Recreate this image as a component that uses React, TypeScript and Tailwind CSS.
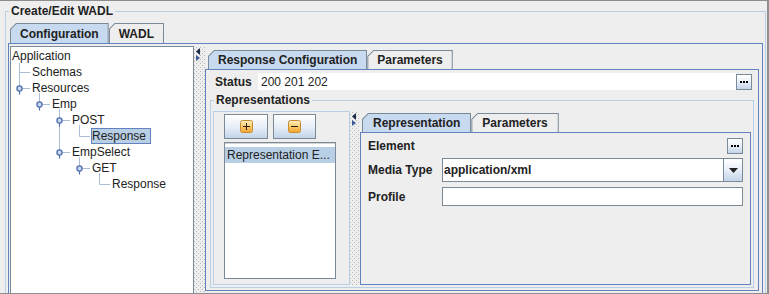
import clsx from "clsx";

type TreeRow = { label: string; pad: string; selected?: boolean };

const TREE: TreeRow[] = [
  { label: "Application", pad: "pl-[1px]" },
  { label: "Schemas", pad: "pl-[21px]" },
  { label: "Resources", pad: "pl-[21px]" },
  { label: "Emp", pad: "pl-[41px]" },
  { label: "POST", pad: "pl-[61px]" },
  { label: "Response", pad: "pl-[80px]", selected: true },
  { label: "EmpSelect", pad: "pl-[61px]" },
  { label: "GET", pad: "pl-[81px]" },
  { label: "Response", pad: "pl-[101px]" },
];

// tree handle centres, relative to the tree's white area
const HANDLES: [number, number][] = [
  [8.5, 41.5],
  [28.5, 57.5],
  [48.5, 73.5],
  [48.5, 105.5],
  [68.5, 121.5],
];

const GRAD_BTN =
  "border border-[#7a8a99] bg-linear-to-b from-white via-[#e8eff8] to-[#c3d4e9]";

const DOTTED =
  "[background-image:conic-gradient(at_1px_1px,transparent_75%,#b9b9b9_0),conic-gradient(at_1px_1px,transparent_75%,#b9b9b9_0)] [background-position:2px_1px,4px_3px] [background-size:4px_4px]";

function Tab({
  label,
  selected,
  size,
  pad,
}: {
  label: string;
  selected?: boolean;
  size: string;
  pad: string;
}) {
  return (
    <div
      className={clsx(
        "bg-[#7a8a99] px-px pt-px [clip-path:polygon(6px_0,100%_0,100%_100%,0_100%,0_6px)]",
        size
      )}
    >
      <div
        className={clsx(
          "flex h-full items-center font-bold [clip-path:polygon(5.4px_0,100%_0,100%_100%,0_100%,0_5.4px)]",
          selected ? "bg-[#c8daf0]" : "bg-[#eeeeee]",
          pad
        )}
      >
        {label}
      </div>
    </div>
  );
}

function Dots() {
  return (
    <svg width="8" height="2" viewBox="0 0 8 2" aria-hidden>
      <rect x="0" y="0" width="2" height="2" fill="#000" />
      <rect x="3" y="0" width="2" height="2" fill="#000" />
      <rect x="6" y="0" width="2" height="2" fill="#000" />
    </svg>
  );
}

function DotsButton() {
  return (
    <div className={clsx("flex h-[16px] w-[16px] shrink-0 items-center justify-center", GRAD_BTN)}>
      <Dots />
    </div>
  );
}

function OrangeIcon({ plus }: { plus?: boolean }) {
  const id = plus ? "og-plus" : "og-minus";
  return (
    <svg width="13" height="13" viewBox="0 0 13 13" aria-hidden>
      <defs>
        <linearGradient id={id} x1="0" y1="0" x2="0" y2="1">
          <stop offset="0" stopColor="#fff1c8" />
          <stop offset="0.5" stopColor="#fccb68" />
          <stop offset="1" stopColor="#f2a232" />
        </linearGradient>
      </defs>
      <rect x="0.5" y="0.5" width="12" height="12" rx="2" fill={`url(#${id})`} stroke="#c98b32" />
      <path d={plus ? "M6.5 3v7M3 6.5h7" : "M3 6.5h7"} stroke="#2b2112" />
    </svg>
  );
}

function SplitArrows() {
  return (
    <svg width="5" height="13" viewBox="0 0 5 13" aria-hidden>
      <path d="M0 3.5L4 0v7z" fill="#1d2b48" />
      <path d="M0 7v6l4-3z" fill="#3c5b96" />
    </svg>
  );
}

function Splitter({ width }: { width: string }) {
  return (
    <div className={clsx("shrink-0 self-stretch pl-[2px] pt-[2px]", width, DOTTED)}>
      <SplitArrows />
    </div>
  );
}

function TreeLines() {
  return (
    <svg
      className="pointer-events-none absolute left-0 top-0"
      width="182"
      height="150"
      viewBox="0 0 182 150"
      fill="none"
      aria-hidden
    >
      <path
        d="M8.5 16V41.5M8.5 25.5H19M8.5 41.5H19M28.5 46V57.5H39M48.5 62V105.5M48.5 73.5H59M48.5 105.5H59M68.5 78V89.5H79M68.5 110V121.5H79M88.5 126V137.5H99"
        stroke="#a9bdd6"
      />
      {HANDLES.map(([x, y]) => (
        <g key={`${x}-${y}`}>
          <path d={`M${x} ${y + 2}v4`} stroke="#4f6fae" strokeWidth="1.2" />
          <circle cx={x} cy={y} r="2.6" fill="#c9d8ee" stroke="#4f6fae" strokeWidth="1.3" />
        </g>
      ))}
    </svg>
  );
}

function Tree() {
  return (
    <div className="relative h-[260px] w-[184px] shrink-0 border border-b-0 border-[#7a8a99] bg-white pt-px">
      <TreeLines />
      {TREE.map((row, i) => (
        <div key={i} className={clsx("relative h-[16px] leading-[16px]", row.pad)}>
          {row.selected ? (
            <span className="inline-block h-[16px] border border-[#6382bf] bg-[#b8cfe5] pr-[4px] leading-[14px]">
              {row.label}
            </span>
          ) : (
            row.label
          )}
        </div>
      ))}
    </div>
  );
}

function RepresentationsList() {
  return (
    <div className="h-[174px] w-[137px] shrink-0 border border-[#b8cfe5] pl-[10px] pt-[2px]">
      <div className="flex gap-[5px]">
        <div className={clsx("flex h-[25px] w-[44px] items-center justify-center", GRAD_BTN)}>
          <OrangeIcon plus />
        </div>
        <div className={clsx("flex h-[25px] w-[43px] items-center justify-center", GRAD_BTN)}>
          <OrangeIcon />
        </div>
      </div>
      <div className="mt-[3px] h-[137px] w-[112px] border border-[#7a8a99] bg-white">
        <div className="h-[4px] border-t border-[#d4d4d4]" />
        <div className="h-[16px] truncate bg-[#b8cfe5] pl-[2px] leading-[16px]">
          Representation E...
        </div>
      </div>
    </div>
  );
}

function RepresentationPanel() {
  return (
    <div className="pt-[2px]">
      <div className="ml-[2px] flex">
        <Tab label="Representation" selected size="h-[19px]" pad="px-[10px]" />
        <Tab label="Parameters" size="h-[19px]" pad="px-[10px]" />
      </div>
      <div className="h-[153px] w-[391px] border border-[#6382bf] px-[7px] pt-[5px]">
        <div className="flex h-[16px] items-center justify-between">
          <span className="font-bold">Element</span>
          <DotsButton />
        </div>
        <div className="mt-[4px] flex h-[24px] items-center">
          <span className="w-[74px] shrink-0 font-bold">Media Type</span>
          <div className="flex h-full flex-1 border border-[#7a8a99] bg-white">
            <div className="flex flex-1 items-center pl-px font-bold">application/xml</div>
            <div className="flex w-[19px] items-center justify-center border-l border-[#7a8a99] bg-linear-to-b from-white via-[#e8eff8] to-[#c3d4e9]">
              <svg width="9" height="5" viewBox="0 0 9 5" aria-hidden>
                <path d="M0 0h9L4.5 5z" fill="#222" />
              </svg>
            </div>
          </div>
        </div>
        <div className="mt-[5px] flex h-[19px] items-center">
          <span className="w-[74px] shrink-0 font-bold">Profile</span>
          <div className="h-full flex-1 border border-[#7a8a99] bg-white" />
        </div>
      </div>
    </div>
  );
}

function ResponsePanel() {
  return (
    <div className="w-[554px] shrink-0 pt-[4px]">
      <div className="ml-[3px] flex">
        <Tab label="Response Configuration" selected size="h-[19px]" pad="px-[9px]" />
        <Tab label="Parameters" size="h-[19px]" pad="px-[9px]" />
      </div>
      <div className="h-[222px] border border-[#6382bf]">
        <div className="mt-[3px] flex h-[17px] items-center pl-[9px] pr-[6px]">
          <span className="w-[43px] shrink-0 font-bold">Status</span>
          <div className="flex h-full flex-1 items-center bg-white pl-[3px]">200 201 202</div>
          <DotsButton />
        </div>
        <fieldset className="ml-[4px] mt-[3px] h-[195px] w-[544px] min-w-0 border border-[#b8cfe5]">
          <legend className="ml-[3px] px-[2px] font-bold leading-[14px]">Representations</legend>
          <div className="ml-[2px] mt-[4px] flex">
            <RepresentationsList />
            <Splitter width="w-[10px]" />
            <RepresentationPanel />
          </div>
        </fieldset>
      </div>
    </div>
  );
}

export default function App() {
  return (
    <div className="h-[294px] w-[769px] overflow-hidden border-t border-r-2 border-b border-[#8e8e8e] bg-[#eeeeee] pl-[5px] pt-[3px] font-['Liberation_Sans',Arial,sans-serif] text-[12px] text-[#222]">
      <fieldset className="h-[300px] w-[761px] min-w-0 border border-b-0 border-[#b8cfe5]">
        <legend className="ml-[3px] px-[2px] font-bold leading-[14px]">Create/Edit WADL</legend>
        <div className="ml-[2px] mt-[5px]">
          <div className="ml-[2px] flex">
            <Tab label="Configuration" selected size="h-[20px]" pad="px-[9px]" />
            <Tab label="WADL" size="h-[20px]" pad="px-[9px]" />
          </div>
          <div className="flex h-[260px] w-[755px] border border-b-0 border-[#6382bf] pl-px pt-[2px]">
            <Tree />
            <Splitter width="w-[11px]" />
            <ResponsePanel />
          </div>
        </div>
      </fieldset>
    </div>
  );
}
